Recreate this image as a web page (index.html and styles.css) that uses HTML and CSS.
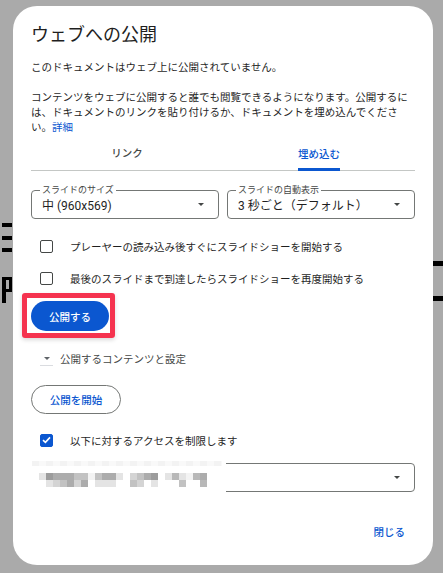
FILE: index.html
```html
<!DOCTYPE html>
<html lang="ja">
<head>
    <meta charset="UTF-8">
    <meta name="viewport" content="width=device-width, initial-scale=1.0">
    <title>ウェブへの公開</title>
    <link rel="stylesheet" href="styles.css">
</head>
<body>
    <div class="backdrop">
        <span class="bd bd-l1"></span>
        <span class="bd bd-l2"></span>
        <span class="bd bd-l3"></span>
        <span class="bd bd-l4"></span>
        <span class="bd bd-l5"></span>
        <span class="bd bd-l6"></span>
        <span class="bd bd-l7"></span>
        <span class="bd bd-r1"></span>
        <span class="bd bd-r2"></span>
    </div>

    <div class="dialog">
        <h1 class="dialog-title">ウェブへの公開</h1>
        <p class="text">このドキュメントはウェブ上に公開されていません。</p>
        <p class="text para">コンテンツをウェブに公開すると誰でも閲覧できるようになります。公開するには、ドキュメントのリンクを貼り付けるか、ドキュメントを埋め込んでください。<a class="link" href="#">詳細</a></p>

        <div class="tabs">
            <div class="tab">リンク</div>
            <div class="tab active"><span>埋め込む</span></div>
        </div>

        <div class="selects">
            <div class="select">
                <span class="select-label">スライドのサイズ</span>
                <span class="select-value">中 (960x569)</span>
                <span class="arrow"></span>
            </div>
            <div class="select">
                <span class="select-label">スライドの自動表示</span>
                <span class="select-value">3 秒ごと（デフォルト）</span>
                <span class="arrow"></span>
            </div>
        </div>

        <label class="check-row first">
            <span class="checkbox"></span>
            プレーヤーの読み込み後すぐにスライドショーを開始する
        </label>
        <label class="check-row">
            <span class="checkbox"></span>
            最後のスライドまで到達したらスライドショーを再度開始する
        </label>

        <div class="publish-row">
            <button class="btn-filled highlight">公開する</button>
        </div>

        <div class="disclosure">
            <span class="disclosure-toggle"><span class="arrow small"></span></span>
            公開するコンテンツと設定
        </div>

        <div class="start-row">
            <button class="btn-outlined">公開を開始</button>
        </div>

        <label class="check-row restrict">
            <span class="checkbox checked">
                <svg width="9" height="8" viewBox="0 0 9 8"><path d="M1 4.2 L3.4 6.4 L8 1.4" fill="none" stroke="#fff" stroke-width="1.6"/></svg>
            </span>
            以下に対するアクセスを制限します
        </label>

        <div class="field">
            <span class="arrow"></span>
            <div class="redact">
                <div class="redact-top"></div>
                <div class="mosaic">
                    <i class="g5"></i><i class="g1"></i><i class="g2"></i><i class="g2"></i><i class="g2"></i><i class="g3"></i><i class="g3"></i><i class="g7"></i><i class="g3"></i><i class="g2"></i><i class="g2"></i><i class="g5"></i><i class="g8"></i><i class="g4"></i><i class="g3"></i><i class="g2"></i><i class="g1"></i><i class="g8"></i><i class="g5"></i><i class="g6"></i><i class="g5"></i><i class="g7"></i><i class="g6"></i><i class="g2"></i>
                    <i class="g8"></i><i class="g5"></i><i class="g4"></i><i class="g3"></i><i class="g2"></i><i class="g4"></i><i class="g2"></i><i class="g8"></i><i class="g5"></i><i class="g5"></i><i class="g5"></i><i class="g8"></i><i class="g8"></i><i class="g3"></i><i class="g4"></i><i class="g8"></i><i class="g5"></i><i class="g8"></i><i class="g8"></i><i class="g8"></i><i class="g3"></i><i class="g8"></i><i class="g8"></i><i class="g6"></i>
                </div>
            </div>
        </div>

        <div class="actions">
            <button class="btn-text">閉じる</button>
        </div>
    </div>
</body>
</html>
```

FILE: styles.css
```css
body {
    margin: 0;
    height: 573px;
    overflow: hidden;
    background-color: #aaaaaa;
    font-family: Roboto, "Noto Sans CJK JP", sans-serif;
    color: #1f1f1f;
    position: relative;
}
.backdrop .bd {
    position: absolute;
    background: #000;
}
.bd-l1 { left: 2px; top: 223px; width: 10px; height: 4px; }
.bd-l2 { left: 2px; top: 236px; width: 10px; height: 4px; }
.bd-l3 { left: 2px; top: 248px; width: 10px; height: 4px; }
.bd-l4 { left: 2px; top: 277px; width: 10px; height: 3px; }
.bd-l5 { left: 2px; top: 277px; width: 4px; height: 26px; }
.bd-l6 { left: 2px; top: 289px; width: 10px; height: 3px; }
.bd-l7 { left: 9px; top: 277px; width: 3px; height: 15px; }
.bd-r1 { left: 433px; top: 261px; width: 10px; height: 5px; }
.bd-r2 { left: 433px; top: 296px; width: 10px; height: 5px; }

.dialog {
    position: relative;
    z-index: 1;
    margin: 6px 0 0 13px;
    width: 420px;
    height: 559px;
    box-sizing: border-box;
    padding: 17px 18px 0;
    background: #fff;
    border-radius: 24px;
    display: flex;
    flex-direction: column;
}
.dialog-title {
    margin: 0 0 13px;
    font-size: 18px;
    font-weight: 400;
    line-height: 24px;
    color: #1f1f1f;
}
.text {
    margin: 0;
    font-size: 10.5px;
    line-height: 15px;
    color: #1f1f1f;
}
.para {
    margin-top: 15px;
}
.link {
    display: inline-block;
    line-height: 15px;
    color: #0b57d0;
    text-decoration: none;
}

.tabs {
    display: flex;
    height: 35px;
    border-bottom: 1px solid #c4c7c5;
}
.tab {
    flex: 1;
    display: flex;
    align-items: center;
    justify-content: center;
    font-size: 10.5px;
    font-weight: 500;
    color: #444746;
}
.tab.active {
    color: #0b57d0;
}
.tab.active span {
    height: 100%;
    display: flex;
    align-items: center;
    box-sizing: border-box;
    padding-top: 3px;
    border-bottom: 3px solid #0b57d0;
    border-radius: 2px 2px 0 0;
    margin-bottom: -1px;
}

.selects {
    display: grid;
    grid-template-columns: 1fr 1fr;
    gap: 8px;
    margin-top: 19px;
}
.select {
    position: relative;
    height: 29px;
    box-sizing: border-box;
    border: 1px solid #747775;
    border-radius: 4px;
    display: flex;
    align-items: center;
    padding: 0 14px 0 10px;
}
.select-label {
    position: absolute;
    left: 8px;
    top: -7px;
    padding: 0 2px;
    background: #fff;
    font-size: 9px;
    line-height: 12px;
    color: #444746;
}
.select-value {
    flex: 1;
    font-size: 12px;
    color: #1f1f1f;
}
.arrow {
    width: 0;
    height: 0;
    border-left: 3.5px solid transparent;
    border-right: 3.5px solid transparent;
    border-top: 3.5px solid #444746;
}

.check-row {
    display: flex;
    align-items: center;
    height: 32px;
    padding-left: 9px;
    font-size: 10.5px;
    color: #1f1f1f;
}
.check-row.first {
    margin-top: 11px;
}
.checkbox {
    width: 13px;
    height: 13px;
    box-sizing: border-box;
    border: 1.5px solid #444746;
    border-radius: 2px;
    margin-right: 17px;
    display: flex;
    align-items: center;
    justify-content: center;
}
.checkbox.checked {
    background: #0b57d0;
    border-color: #0b57d0;
}

.publish-row {
    margin-top: 7px;
    display: flex;
}
button {
    font-family: inherit;
    cursor: pointer;
}
.btn-filled {
    height: 30px;
    width: 78px;
    border: none;
    border-radius: 15px;
    background: #0b57d0;
    color: #fff;
    font-size: 10.5px;
    font-weight: 500;
}
.highlight {
    position: relative;
}
.highlight::after {
    content: "";
    position: absolute;
    top: -8px;
    left: -9px;
    right: -6px;
    bottom: -7px;
    border: 5px solid #f5334f;
    border-radius: 3px;
    box-shadow: 0 2px 4px rgba(0, 0, 0, 0.15);
}

.disclosure {
    margin-top: 15px;
    height: 24px;
    display: flex;
    align-items: center;
    padding-left: 9px;
    font-size: 10.5px;
    color: #444746;
}
.disclosure-toggle {
    width: 13px;
    height: 12px;
    margin-right: 7px;
    margin-top: 2px;
    border-bottom: 1px solid #dadce0;
    display: flex;
    align-items: center;
    justify-content: center;
}
.arrow.small {
    border-left-width: 3px;
    border-right-width: 3px;
    border-top-width: 3px;
    border-top-color: #5f6368;
}

.start-row {
    margin-top: 15px;
    display: flex;
}
.btn-outlined {
    height: 29px;
    width: 90px;
    border: 1px solid #747775;
    border-radius: 15px;
    background: #fff;
    color: #0b57d0;
    font-size: 10.5px;
    font-weight: 500;
}

.check-row.restrict {
    margin-top: 10px;
}

.field {
    position: relative;
    margin-top: 7px;
    height: 29px;
    box-sizing: border-box;
    border: 1px solid #747775;
    border-radius: 4px;
    display: flex;
    align-items: center;
    justify-content: flex-end;
    padding-right: 14px;
}
.redact {
    position: absolute;
    left: -1px;
    top: -5px;
    width: 195px;
    height: 36px;
    background: #fff;
}
.redact-top {
    margin: 2px 0 0 1px;
    width: 190px;
    height: 5px;
    background: repeating-linear-gradient(90deg, #f3f3f3 0 7px, #f9f9f9 7px 14px);
}
.mosaic {
    margin: 7px 0 0 8px;
    display: grid;
    grid-template-columns: repeat(24, 7px);
    grid-auto-rows: 7px;
}
.mosaic i { display: block; }
.g1 { background: #9c9c9c; }
.g2 { background: #acacac; }
.g3 { background: #c2c2c2; }
.g4 { background: #d4d4d4; }
.g5 { background: #e4e4e4; }
.g6 { background: #b8b8b8; }
.g7 { background: #f3f3f3; }
.g8 { background: #fff; }

.actions {
    margin-top: 27px;
    display: flex;
    justify-content: flex-end;
}
.btn-text {
    height: 24px;
    border: none;
    background: none;
    padding: 0 10px;
    color: #0b57d0;
    font-size: 10.5px;
    font-weight: 500;
}
```
